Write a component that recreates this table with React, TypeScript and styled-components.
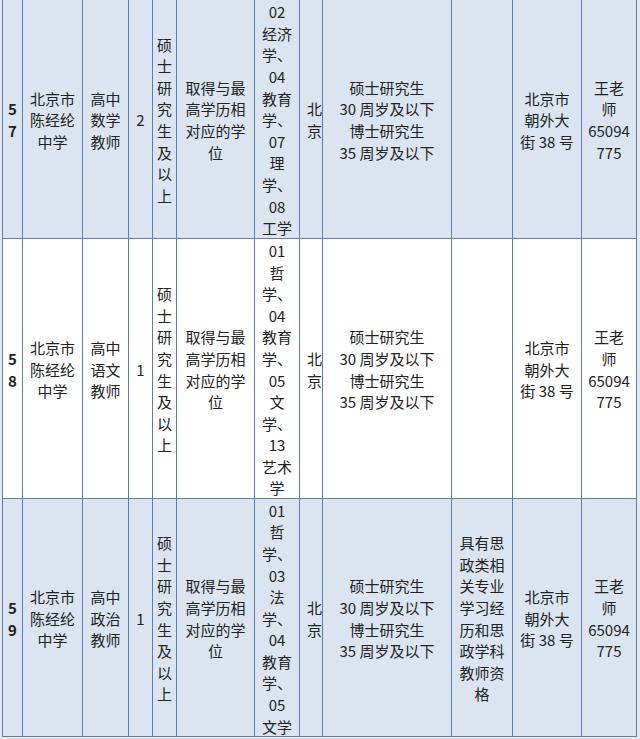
import React from 'react';
import styled, { createGlobalStyle } from 'styled-components';

const GlobalStyle = createGlobalStyle`
  html, body {
    margin: 0;
    padding: 0;
    background: #e4e9f0;
  }
`;

const COLS = [20, 60, 46, 24, 24, 78, 45, 23, 129, 61, 69, 55];
const LINE = '#5f7da8';

const Sheet = styled.div`
  padding-left: 2px;
  width: 635px;
  font-family: 'Noto Sans CJK SC', 'Noto Sans', sans-serif;
  font-size: 15px;
  color: #222;
`;

const Row = styled.div<{ $h: number; $shade: boolean }>`
  display: grid;
  grid-template-columns: ${COLS.map((w) => `${w}px`).join(' ')};
  height: ${(p) => p.$h}px;
  border-left: 1px solid ${LINE};
  border-bottom: 1px solid ${LINE};
  background: ${(p) => (p.$shade ? '#dbe5f1' : '#ffffff')};
  box-sizing: border-box;
  width: 635px;
`;

const Cell = styled.div<{ $align?: 'left' | 'center'; $bold?: boolean }>`
  box-sizing: border-box;
  border-right: 1px solid ${LINE};
  display: flex;
  flex-direction: column;
  justify-content: center;
  align-items: ${(p) => (p.$align === 'left' ? 'flex-start' : 'center')};
  padding-left: ${(p) => (p.$align === 'left' ? '7px' : '0')};
  padding-top: 2px;
  overflow: hidden;
  line-height: 21.6px;
  font-weight: ${(p) => (p.$bold ? 700 : 400)};
  white-space: nowrap;
  text-align: center;
`;

type RowData = {
  no: string[];
  job: string[];
  count: string;
  majors: string[];
  extra: string[];
  h: number;
  shade: boolean;
};

const rows: RowData[] = [
  {
    no: ['5', '7'],
    job: ['高中', '数学', '教师'],
    count: '2',
    majors: ['02', '经济', '学、', '04', '教育', '学、', '07', '理', '学、', '08', '工学'],
    extra: [],
    h: 239,
    shade: true,
  },
  {
    no: ['5', '8'],
    job: ['高中', '语文', '教师'],
    count: '1',
    majors: ['01', '哲', '学、', '04', '教育', '学、', '05', '文', '学、', '13', '艺术', '学'],
    extra: [],
    h: 260,
    shade: false,
  },
  {
    no: ['5', '9'],
    job: ['高中', '政治', '教师'],
    count: '1',
    majors: ['01', '哲', '学、', '03', '法', '学、', '04', '教育', '学、', '05', '文学'],
    extra: ['具有思', '政类相', '关专业', '学习经', '历和思', '政学科', '教师资', '格'],
    h: 238,
    shade: true,
  },
];

const Lines: React.FC<{ items: string[] }> = ({ items }) => (
  <>
    {items.map((t, i) => (
      <span key={i}>{t}</span>
    ))}
  </>
);

const App: React.FC = () => {
  return (
    <Sheet>
      <GlobalStyle />
      {rows.map((r, i) => (
        <Row key={i} $h={r.h} $shade={r.shade}>
          <Cell $bold>
            <Lines items={r.no} />
          </Cell>
          <Cell>
            <Lines items={['北京市', '陈经纶', '中学']} />
          </Cell>
          <Cell>
            <Lines items={r.job} />
          </Cell>
          <Cell>{r.count}</Cell>
          <Cell>
            <Lines items={['硕', '士', '研', '究', '生', '及', '以', '上']} />
          </Cell>
          <Cell>
            <Lines items={['取得与最', '高学历相', '对应的学', '位']} />
          </Cell>
          <Cell>
            <Lines items={r.majors} />
          </Cell>
          <Cell $align="left">
            <Lines items={['北', '京']} />
          </Cell>
          <Cell>
            <Lines items={['硕士研究生', '30 周岁及以下', '博士研究生', '35 周岁及以下']} />
          </Cell>
          <Cell>
            <Lines items={r.extra} />
          </Cell>
          <Cell>
            <Lines items={['北京市', '朝外大', '街 38 号']} />
          </Cell>
          <Cell>
            <Lines items={['王老', '师', '65094', '775']} />
          </Cell>
        </Row>
      ))}
    </Sheet>
  );
};

export default App;
